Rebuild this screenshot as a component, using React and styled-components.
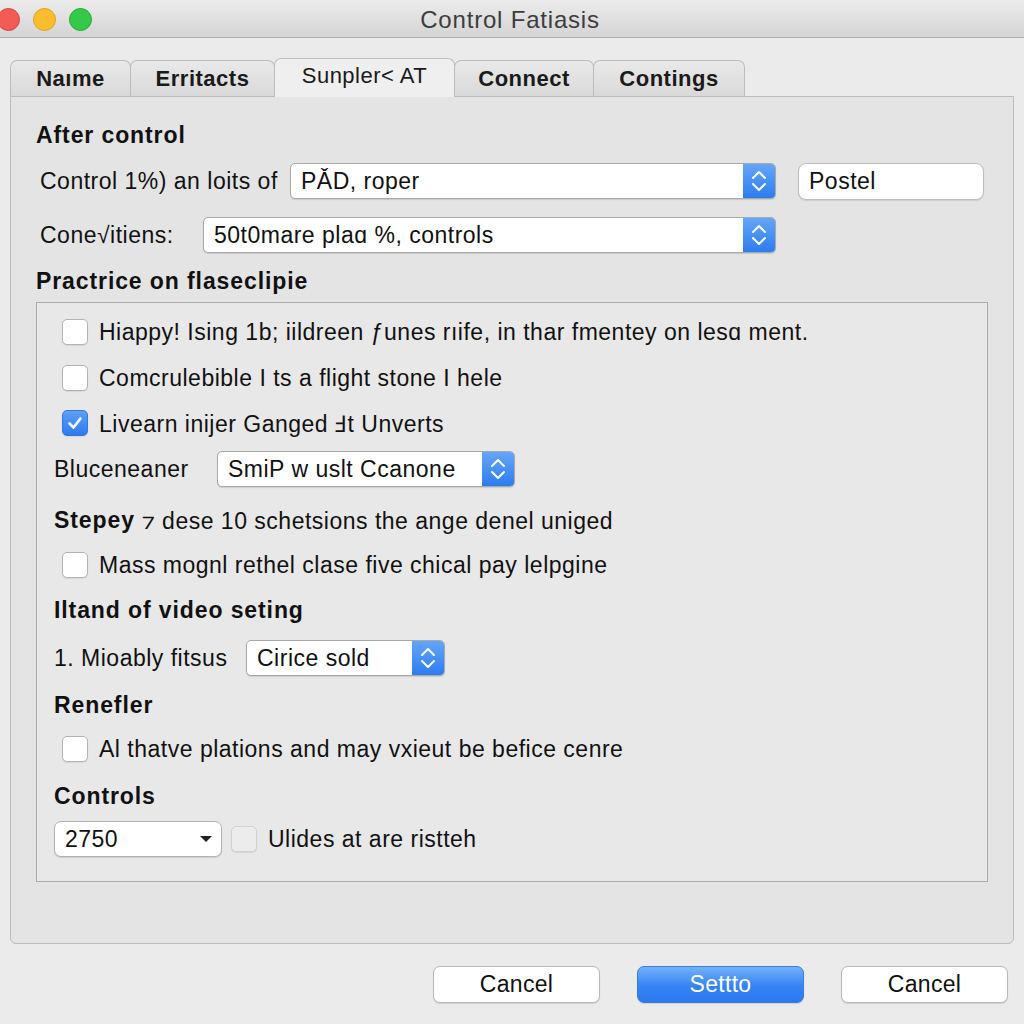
import React from 'react';
import styled, { createGlobalStyle, css } from 'styled-components';

const GlobalStyle = createGlobalStyle`
  html, body {
    margin: 0;
    padding: 0;
    background: #ebebeb;
  }
  body {
    font-family: "Liberation Sans", Arial, Helvetica, sans-serif;
    color: #111;
  }
`;

const Window = styled.div`
  width: 1024px;
  height: 1024px;
  overflow: hidden;
  background: #ebebeb;
  display: flex;
  flex-direction: column;
`;

const TitleBar = styled.div`
  height: 38px;
  flex: none;
  position: relative;
  display: flex;
  align-items: center;
  justify-content: center;
  background: linear-gradient(#ececec, #d4d4d4);
  border-bottom: 1px solid #b0b0b0;
  box-sizing: border-box;
`;

const Lights = styled.div`
  position: absolute;
  left: -3px;
  top: 8px;
  display: flex;
  gap: 13px;
`;

const Light = styled.span`
  width: 23px;
  height: 23px;
  border-radius: 50%;
  box-sizing: border-box;
  border: 1px solid ${p => p.$edge};
  background: ${p => p.$color};
`;

const Title = styled.div`
  font-size: 24px;
  letter-spacing: 0.8px;
  color: #3d3d3d;
  transform: translate(-2px, 1px);
`;

const Body = styled.div`
  padding: 20px 10px 0 10px;
  display: flex;
  flex-direction: column;
`;

const TabStrip = styled.div`
  display: flex;
  align-items: flex-end;
  height: 38px;
  position: relative;
  z-index: 1;
`;

const Tab = styled.div`
  width: ${p => p.$w}px;
  height: 36px;
  box-sizing: border-box;
  display: flex;
  align-items: center;
  justify-content: center;
  font-size: 22px;
  font-weight: 600;
  letter-spacing: 0.5px;
  color: #1a1a1a;
  border: 1px solid #bcbcbc;
  border-bottom: none;
  border-radius: 7px 7px 0 0;
  margin-right: -1px;
  background: linear-gradient(#e9e9e9, #d9d9d9);
  ${p => p.$active && css`
    background: #efefef;
    font-weight: 500;
    padding-bottom: 5px;
    margin-bottom: -1px;
    height: 39px;
  `}
`;

const Panel = styled.div`
  height: 848px;
  box-sizing: border-box;
  border: 1px solid #bbbbbb;
  border-radius: 0 0 6px 6px;
  background: #e4e4e4;
  padding: 22px 25px 0 25px;
  display: flex;
  flex-direction: column;
`;

const Heading = styled.div`
  font-size: 23px;
  font-weight: bold;
  letter-spacing: 0.9px;
  height: 32px;
  display: flex;
  align-items: center;
  margin-top: ${p => p.$mt || 0}px;
`;

const FieldRow = styled.div`
  display: flex;
  align-items: center;
  height: 36px;
  margin-top: ${p => p.$mt || 0}px;
  padding-left: 4px;
`;

const Label = styled.span`
  width: ${p => p.$w}px;
  flex: none;
  font-size: 23px;
  letter-spacing: 0.5px;
  white-space: nowrap;
`;

const SelectBox = styled.div`
  width: ${p => p.$w}px;
  height: 36px;
  box-sizing: border-box;
  display: flex;
  align-items: stretch;
  background: #fff;
  border: 1px solid #a9a9a9;
  border-radius: 5px;
  box-shadow: 0 1px 1px rgba(0, 0, 0, 0.12);
  overflow: hidden;
`;

const SelectText = styled.div`
  flex: 1;
  display: flex;
  align-items: center;
  padding-left: 10px;
  font-size: 23px;
  letter-spacing: 0.5px;
  white-space: nowrap;
`;

const Stepper = styled.div`
  width: 32px;
  flex: none;
  display: flex;
  align-items: center;
  justify-content: center;
  background: linear-gradient(#64a6f8, #2d7cf0);
`;

const TextField = styled.div`
  width: 186px;
  height: 37px;
  box-sizing: border-box;
  margin-left: 22px;
  background: #fff;
  border: 1px solid #bdbdbd;
  border-radius: 8px;
  box-shadow: 0 1px 1px rgba(0, 0, 0, 0.1);
  display: flex;
  align-items: center;
  padding-left: 10px;
  font-size: 23px;
  letter-spacing: 0.5px;
`;

const GroupBox = styled.div`
  margin-top: 5px;
  height: 580px;
  box-sizing: border-box;
  border: 1px solid #ababab;
  background: #e8e8e8;
  padding: 6px 0 0 17px;
  display: flex;
  flex-direction: column;
`;

const Row = styled.div`
  height: ${p => p.$h}px;
  display: flex;
  align-items: center;
  font-size: 23px;
  letter-spacing: 0.5px;
  white-space: nowrap;
  padding-left: ${p => (p.$check ? 8 : 0)}px;
`;

const Bold = styled.span`
  font-weight: bold;
  letter-spacing: 0.9px;
`;

const Box = styled.span`
  width: 26px;
  height: 26px;
  box-sizing: border-box;
  flex: none;
  margin-right: 11px;
  border-radius: 5px;
  border: 1px solid ${p => (p.$checked ? '#2f78e6' : p.$faint ? '#d2d2d2' : '#b3b3b3')};
  background: ${p => (p.$checked ? 'linear-gradient(#5ba0f7, #2f79ee)' : p.$faint ? '#ececec' : '#fff')};
  box-shadow: 0 1px 1px rgba(0, 0, 0, 0.08);
  display: flex;
  align-items: center;
  justify-content: center;
`;

const Combo = styled.div`
  width: 168px;
  height: 36px;
  box-sizing: border-box;
  margin-right: 9px;
  background: #fff;
  border: 1px solid #b3b3b3;
  border-radius: 7px;
  box-shadow: 0 1px 1px rgba(0, 0, 0, 0.12);
  display: flex;
  align-items: center;
  justify-content: space-between;
  padding: 0 8px 0 10px;
  font-size: 23px;
  letter-spacing: 0.5px;
`;

const Footer = styled.div`
  display: flex;
  justify-content: flex-end;
  gap: 37px;
  padding: 22px 6px 0 0;
`;

const Button = styled.div`
  width: 167px;
  height: 37px;
  box-sizing: border-box;
  display: flex;
  align-items: center;
  justify-content: center;
  font-size: 23px;
  letter-spacing: 0.3px;
  border-radius: 7px;
  border: 1px solid #b8b8b8;
  background: #fff;
  color: #111;
  box-shadow: 0 1px 1px rgba(0, 0, 0, 0.12);
  ${p => p.$primary && css`
    border-color: #3a7be0;
    background: linear-gradient(#74b1fb, #3583f4 55%, #2c78ef);
    color: #fff;
  `}
`;

const Chevrons = () => (
  <svg width="18" height="26" viewBox="0 0 18 26">
    <path d="M3 10 L9 4 L15 10" fill="none" stroke="#fff" strokeWidth="2" strokeLinecap="round" strokeLinejoin="round" />
    <path d="M3 16 L9 22 L15 16" fill="none" stroke="#fff" strokeWidth="2" strokeLinecap="round" strokeLinejoin="round" />
  </svg>
);

const Check = () => (
  <svg width="18" height="18" viewBox="0 0 18 18">
    <path d="M3.5 9.5 L7.5 13.5 L14.5 4.5" fill="none" stroke="#fff" strokeWidth="2.6" strokeLinecap="round" strokeLinejoin="round" />
  </svg>
);

const Caret = () => (
  <svg width="14" height="8" viewBox="0 0 14 8">
    <path d="M1 1 L13 1 L7 7 Z" fill="#222" />
  </svg>
);

const Select = ({ w, children }) => (
  <SelectBox $w={w}>
    <SelectText>{children}</SelectText>
    <Stepper><Chevrons /></Stepper>
  </SelectBox>
);

const tabs = [
  { name: 'Naıme', w: 121 },
  { name: 'Erritacts', w: 145 },
  { name: 'Sunpler˂ AT', w: 181, active: true },
  { name: 'Connect', w: 140 },
  { name: 'Contings', w: 152 },
];

export default function App() {
  return (
    <Window>
      <GlobalStyle />
      <TitleBar>
        <Lights>
          <Light $color="#f25c54" $edge="#d9443d" />
          <Light $color="#fbbd2e" $edge="#dea123" />
          <Light $color="#35c948" $edge="#27a936" />
        </Lights>
        <Title>Control Fatiasis</Title>
      </TitleBar>
      <Body>
        <TabStrip>
          {tabs.map(t => (
            <Tab key={t.name} $w={t.w} $active={t.active}>{t.name}</Tab>
          ))}
        </TabStrip>
        <Panel>
          <Heading>After control</Heading>
          <FieldRow $mt={12}>
            <Label $w={250}>Control 1%) an loits of</Label>
            <Select w={486}>PǍD, roper</Select>
            <TextField>Postel</TextField>
          </FieldRow>
          <FieldRow $mt={18}>
            <Label $w={163}>Cone√itiens:</Label>
            <Select w={573}>50t0mare plaɑ %, controls</Select>
          </FieldRow>
          <Heading $mt={12}>Practrice on flaseclipie</Heading>
          <GroupBox>
            <Row $h={46} $check><Box />Hiappy! Ising 1b; iildreen ƒunes rıife, in thar fmentey on lesɑ ment.</Row>
            <Row $h={46} $check><Box />Comcrulebible I ts a flight stone I hele</Row>
            <Row $h={44} $check><Box $checked><Check /></Box>Livearn inijer Ganged Ⅎt Unverts</Row>
            <Row $h={48}>
              <Label $w={163}>Bluceneaner</Label>
              <Select w={298}>SmiP w uslt Ccanone</Select>
            </Row>
            <Row $h={54}><Bold>Stepey</Bold>&nbsp;⁊ dese 10 schetsions the ange denel uniged</Row>
            <Row $h={36} $check><Box />Mass mognl rethel clase five chical pay lelpgine</Row>
            <Row $h={54}><Bold>Iltand of video seting</Bold></Row>
            <Row $h={42}>
              <Label $w={192}>1. Mioably fitsus</Label>
              <Select w={199}>Cirice sold</Select>
            </Row>
            <Row $h={52}><Bold>Renefler</Bold></Row>
            <Row $h={36} $check><Box />Al thatve plations and may vxieut be befice cenre</Row>
            <Row $h={58}><Bold>Controls</Bold></Row>
            <Row $h={28}>
              <Combo>2750<Caret /></Combo>
              <Box $faint />Ulides at are ristteh
            </Row>
          </GroupBox>
        </Panel>
        <Footer>
          <Button>Cancel</Button>
          <Button $primary>Settto</Button>
          <Button>Cancel</Button>
        </Footer>
      </Body>
    </Window>
  );
}
